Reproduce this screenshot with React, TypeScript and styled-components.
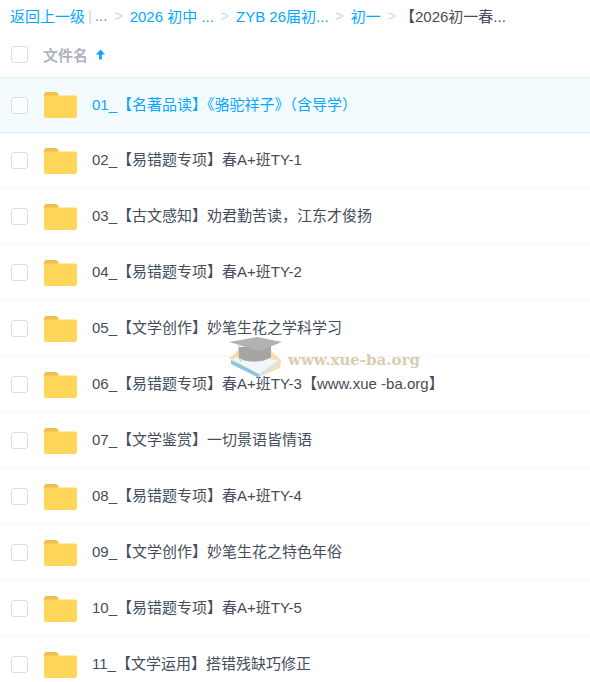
import styled, { createGlobalStyle } from 'styled-components';

const GlobalStyle = createGlobalStyle`
  html, body {
    margin: 0;
    padding: 0;
    background: #fff;
    overflow: hidden;
    font-family: "Liberation Sans", "Noto Sans CJK SC", sans-serif;
  }
`;

const Page = styled.div`
  position: relative;
  width: 590px;
  height: 682px;
  overflow: hidden;
`;

const Breadcrumb = styled.div`
  display: flex;
  align-items: center;
  height: 31px;
  padding-left: 10px;
  font-size: 15px;
  white-space: nowrap;
`;

const Crumb = styled.span`
  color: #06a7ff;
`;

const Divider = styled.span`
  color: #c4d8f4;
  margin: 0 3px;
`;

const Dots = styled.span`
  color: #818999;
`;

const Arrow = styled.span`
  color: #c4d8f4;
  font-size: 14px;
  margin: 0 7px;
`;

const Current = styled.span`
  color: #454d5a;
  margin-left: -3px;
`;

const HeadRow = styled.div`
  display: flex;
  align-items: center;
  height: 46px;
  padding-left: 11px;
  box-sizing: border-box;
`;

const CheckBox = styled.span`
  display: block;
  width: 17px;
  height: 17px;
  box-sizing: border-box;
  border: 1px solid #d5dce6;
  border-radius: 3px;
  background: #fff;
  opacity: 0.9;
  flex-shrink: 0;
`;

const HeadLabel = styled.span`
  margin-left: 15px;
  font-size: 15px;
  font-weight: 700;
  color: #afb3bf;
`;

const SortIcon = styled.svg`
  margin: 1px 0 0 7px;
  width: 11px;
  height: 11px;
`;

const List = styled.div`
  display: flex;
  flex-direction: column;
`;

const Row = styled.div<{ $active: boolean }>`
  display: flex;
  align-items: center;
  height: 56px;
  box-sizing: border-box;
  padding-left: 11px;
  border-bottom: 1px solid ${(p) => (p.$active ? '#e2eefb' : '#f2f6fd')};
  border-top: ${(p) => (p.$active ? '1px solid #e2eefb' : '0')};
  background: ${(p) => (p.$active ? '#f4fbff' : '#fff')};
  color: ${(p) => (p.$active ? '#06a7ff' : '#454d5a')};
`;

const Folder = styled.svg`
  width: 33px;
  height: 26px;
  margin-left: 16px;
  flex-shrink: 0;
`;

const FileName = styled.span`
  margin-left: 15px;
  font-size: 15px;
  line-height: 20px;
  margin-bottom: 1px;
  white-space: nowrap;
`;

const Watermark = styled.div`
  position: absolute;
  left: 228px;
  top: 336px;
  display: flex;
  align-items: flex-start;
  pointer-events: none;
`;

const MarkText = styled.span`
  margin: 15px 0 0 6px;
  font-family: "DejaVu Serif", "Liberation Serif", serif;
  font-size: 15px;
  font-weight: 700;
  color: #d9ccb0;
  white-space: nowrap;
`;

const files = [
  '01_【名著品读】《骆驼祥子》（含导学）',
  '02_【易错题专项】春A+班TY-1',
  '03_【古文感知】劝君勤苦读，江东才俊扬',
  '04_【易错题专项】春A+班TY-2',
  '05_【文学创作】妙笔生花之学科学习',
  '06_【易错题专项】春A+班TY-3【www.xue -ba.org】',
  '07_【文学鉴赏】一切景语皆情语',
  '08_【易错题专项】春A+班TY-4',
  '09_【文学创作】妙笔生花之特色年俗',
  '10_【易错题专项】春A+班TY-5',
  '11_【文学运用】搭错残缺巧修正',
];

function FolderIcon() {
  return (
    <Folder viewBox="0 0 33 26">
      <path d="M0 2.500C0 1.100 1.100 0 2.500 0h9c1.400 0 2.600.9 3 2.500L15 4H0z" fill="#f2c04f" />
      <rect x="0" y="3.500" width="33" height="22.500" rx="2" fill="#ffd659" />
    </Folder>
  );
}

function CapMark() {
  return (
    <svg width="54" height="42" viewBox="0 0 54 42">
      <path d="M1 22 L14 11 L42 14 L53 24 L52 32 L31 41Z" fill="#f9dfae" />
      <path d="M3 24 L31 38 L31 42 L3 28Z" fill="#8cc4e8" />
      <path d="M4 23 L22 17 L50 25 L31 38Z" fill="#f3f6f9" />
      <path d="M31 38 L50 25 L50 29 L31 41Z" fill="#d7e2ea" />
      <path d="M11 11 L11 22 C18 27 36 27 43 21 L43 10Z" fill="#a5a5a5" />
      <path d="M1 6 L29 1 L54 6 L31 15Z" fill="#b2b2b2" />
      <path d="M11 8 L10 20 L13 26" fill="none" stroke="#cfc9b8" strokeWidth="1" />
    </svg>
  );
}

export default function App() {
  return (
    <Page>
      <GlobalStyle />
      <Breadcrumb>
        <Crumb>返回上一级</Crumb>
        <Divider>|</Divider>
        <Dots>...</Dots>
        <Arrow>&gt;</Arrow>
        <Crumb>2026 初中 ...</Crumb>
        <Arrow>&gt;</Arrow>
        <Crumb>ZYB 26届初...</Crumb>
        <Arrow>&gt;</Arrow>
        <Crumb>初一</Crumb>
        <Arrow>&gt;</Arrow>
        <Current>【2026初一春...</Current>
      </Breadcrumb>
      <HeadRow>
        <CheckBox />
        <HeadLabel>文件名</HeadLabel>
        <SortIcon viewBox="0 0 12 12">
          <path d="M6 0.500 L11 6 H7.500 V11.500 H4.500 V6 H1Z" fill="#06a7ff" />
        </SortIcon>
      </HeadRow>
      <List>
        {files.map((name, i) => (
          <Row key={name} $active={i === 0}>
            <CheckBox />
            <FolderIcon />
            <FileName>{name}</FileName>
          </Row>
        ))}
      </List>
      <Watermark>
        <CapMark />
        <MarkText>www.xue-ba.org</MarkText>
      </Watermark>
    </Page>
  );
}
